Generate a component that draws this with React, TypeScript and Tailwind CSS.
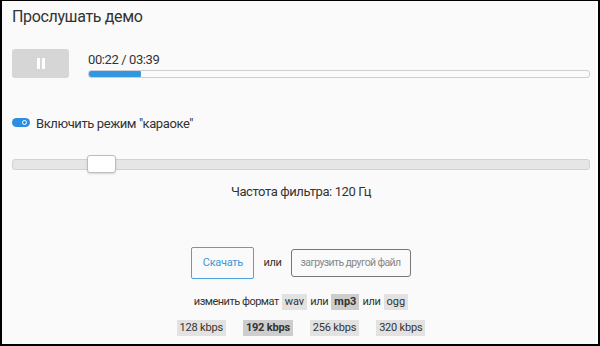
import React from "react";

export default function App() {
  const font = { fontFamily: "Roboto, 'Noto Sans', sans-serif" };
  return (
    <div className="w-[600px] h-[346px] bg-[#fafafa] border-black border-t border-l-2 border-r-2 border-b-2 overflow-hidden text-[#333]" style={font}>
      <div className="h-full border-r-2 border-white pl-[10px] pr-[6px] flex flex-col">
        <div className="mt-[6px] text-[16px] leading-[19px] tracking-[-0.35px] text-[#333]">Прослушать демо</div>

        <div className="mt-[23px] flex items-end gap-[19px]">
          <div className="w-[57px] h-[29px] bg-[#d6d6d6] rounded-[3px] flex items-center justify-center gap-[2px] shrink-0">
            <div className="w-[3px] h-[11px] bg-white" />
            <div className="w-[3px] h-[11px] bg-white" />
          </div>
          <div className="flex-1 flex flex-col">
            <div className="text-[13px] leading-[15px] tracking-[-0.4px] mb-[3px]">00:22 / 03:39</div>
            <div className="h-[8px] rounded-[3px] border border-[#cfcfcf] bg-[#fbfbfb] relative overflow-hidden">
              <div className="absolute left-0 top-[-1px] h-[8px] w-[52px] bg-[#3297e3] rounded-[3px]" />
            </div>
          </div>
        </div>

        <div className="mt-[38px] flex items-start gap-[6px]">
          <div className="mt-[2px] w-[18px] h-[9px] rounded-full bg-[#2f8de0] relative shrink-0">
            <div className="absolute right-[3px] top-[2px] w-[5px] h-[5px] rounded-full border-[1.5px] border-white" />
          </div>
          <div className="text-[13px] leading-[15px] tracking-[-0.4px]">Включить режим "караоке"</div>
        </div>

        <div className="mt-[24px] relative h-[18px] flex items-center">
          <div className="w-full h-[11px] rounded-[3px] bg-[#e6e6e6] border border-[#d2d2d2]" />
          <div className="absolute left-[75px] top-0 w-[29px] h-[18px] bg-white border border-[#bdbdbd] rounded-[3px] shadow-[0_1px_2px_rgba(0,0,0,0.15)]" />
        </div>

        <div className="mt-[11px] text-center text-[13px] leading-[15px] tracking-[-0.4px]">Частота фильтра: 120 Гц</div>

        <div className="mt-[48px] h-[32px] flex items-center justify-center gap-[9px]">
          <div className="w-[63px] h-[32px] border border-[#4aa2e0] rounded-[2px] text-[#3d97d8] text-[11px] tracking-[-0.3px] flex items-center justify-center">Скачать</div>
          <div className="text-[11px] tracking-[-0.3px]">или</div>
          <div className="w-[120px] h-[28px] border border-[#777] rounded-[3px] text-[#888] text-[10.5px] tracking-[-0.6px] flex items-center justify-center whitespace-nowrap">загрузить другой файл</div>
        </div>

        <div className="mt-[15px] h-[16px] flex items-center justify-center gap-[3px] text-[11px] leading-[16px]">
          <span className="tracking-[-0.5px]">изменить формат</span>
          <span className="bg-[#e2e2e2] px-[3px] h-[16px]">wav</span>
          <span className="tracking-[-0.3px]">или</span>
          <span className="bg-[#cdcdcd] px-[3px] h-[16px] font-bold">mp3</span>
          <span className="tracking-[-0.3px]">или</span>
          <span className="bg-[#e2e2e2] px-[3px] h-[16px]">ogg</span>
        </div>

        <div className="mt-[10px] h-[16px] flex items-center justify-center gap-[17px] text-[11px] leading-[16px] tracking-[-0.2px]">
          <span className="bg-[#e2e2e2] px-[3px]">128 kbps</span>
          <span className="bg-[#cdcdcd] px-[3px] font-bold">192 kbps</span>
          <span className="bg-[#e2e2e2] px-[3px]">256 kbps</span>
          <span className="bg-[#e2e2e2] px-[3px]">320 kbps</span>
        </div>
      </div>
    </div>
  );
}
